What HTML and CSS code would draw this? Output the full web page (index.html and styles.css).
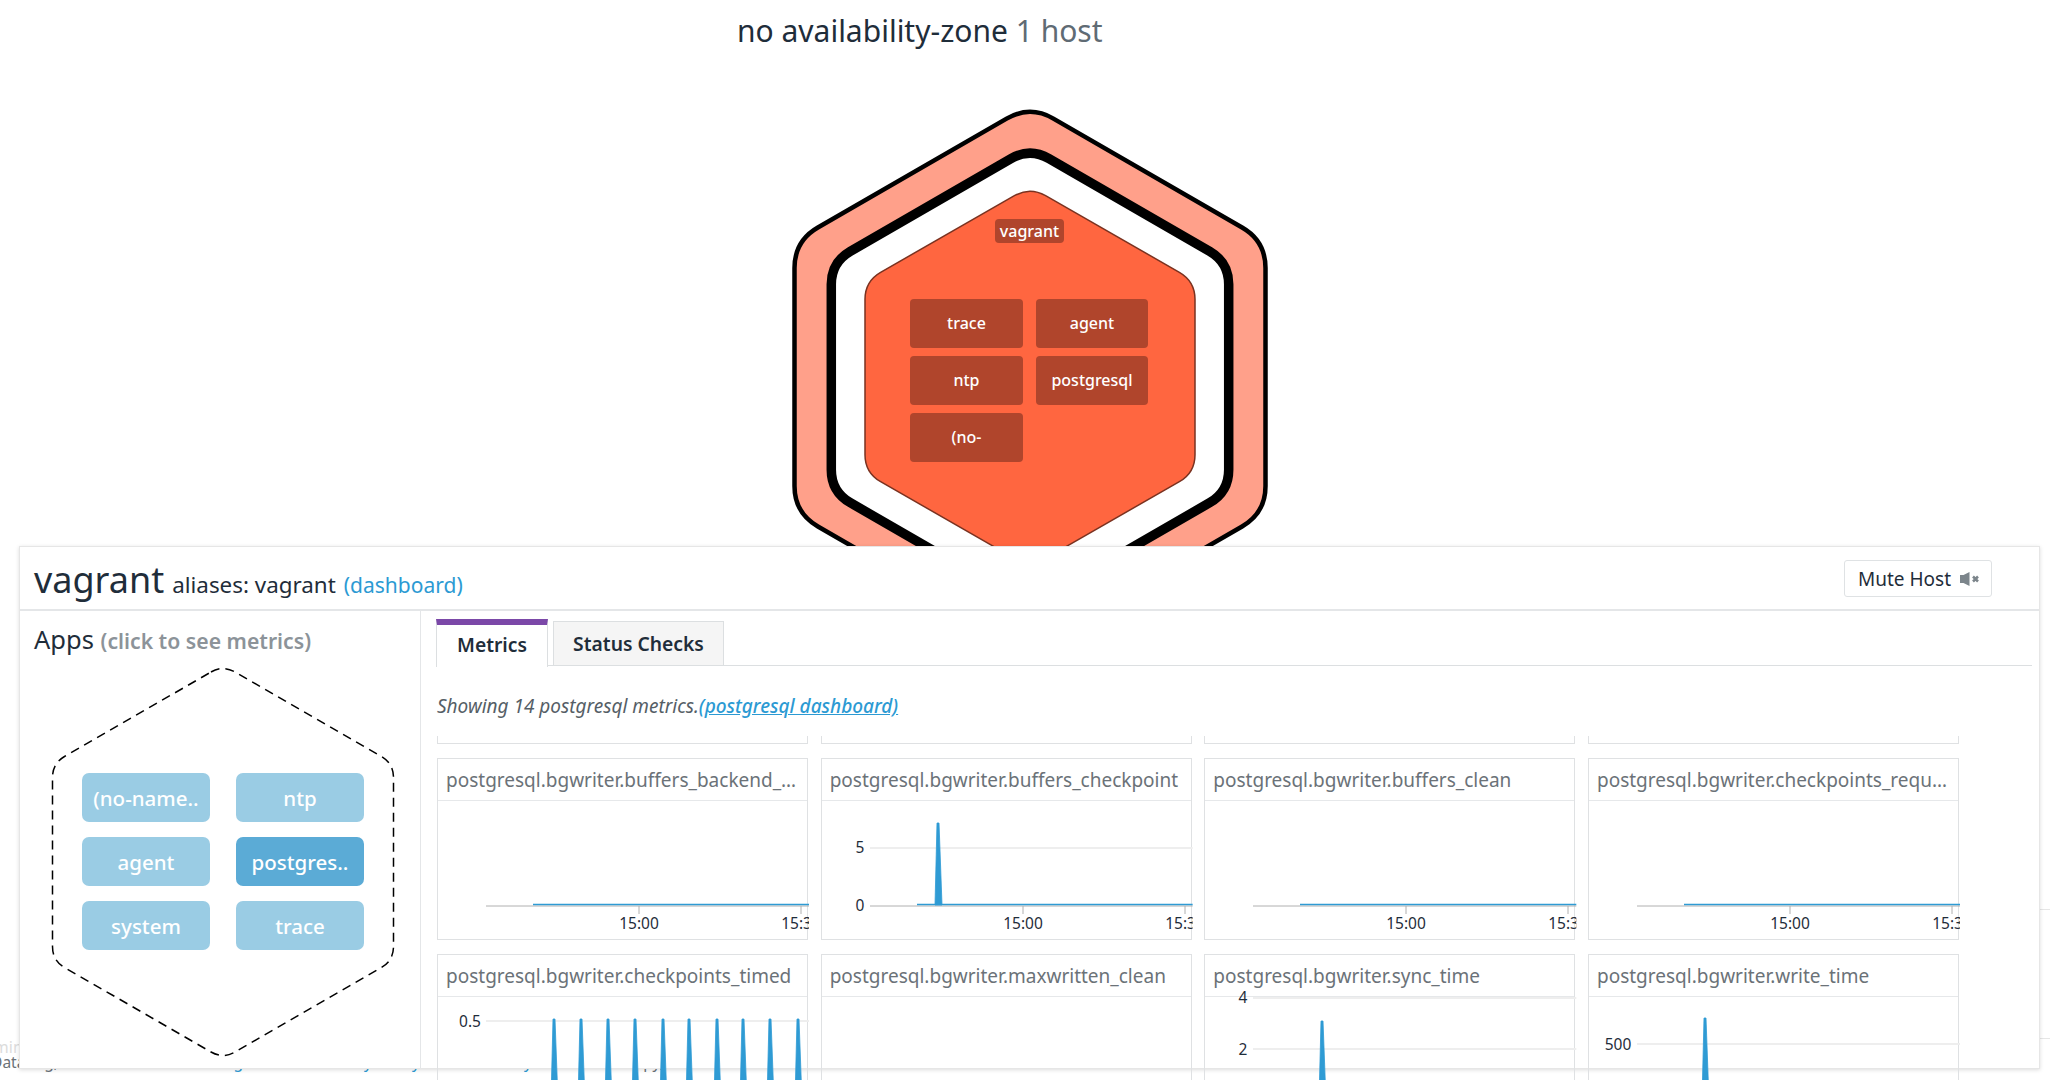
FILE: index.html
```html
<!DOCTYPE html>
<html lang="en">
<head>
<meta charset="utf-8">
<title>Host map</title>
<link rel="stylesheet" href="styles.css">
</head>
<body>
<div class="backdrop">
  <div class="foot-faint">admin</div>
  <div class="foot-line">
    <span>Datadog,</span>
    <a>Monitoring</a>
    <a>Security</a>
    <a>Privacy</a>
    <a>Availability</a>
    <span>Copy,</span>
  </div>
  <div class="foot-rule"></div>
</div>

<h2 class="zone-title">no availability-zone <span class="zone-count">1 host</span></h2>

<div class="host-node">
  <svg class="host-hex" viewBox="-240 -275 480 550" width="480" height="550">
    <path class="ring-outer" d="M-23.4 -258.4Q0 -271.9 23.4 -258.4L212.1 -149.45Q235.5 -135.95 235.5 -108.95L235.5 108.95Q235.5 135.95 212.1 149.45L23.4 258.4Q0 271.9 -23.4 258.4L-212.1 149.45Q-235.5 135.95 -235.5 108.95L-235.5 -108.95Q-235.5 -135.95 -212.1 -149.45Z"/>
    <path class="ring-mid" d="M-19 -218.4Q0 -229.4 19 -218.4L179.7 -125.7Q198.7 -114.7 198.7 -92.7L198.7 92.7Q198.7 114.7 179.7 125.7L19 218.4Q0 229.4 -19 218.4L-179.7 125.7Q-198.7 114.7 -198.7 92.7L-198.7 -92.7Q-198.7 -114.7 -179.7 -125.7Z"/>
    <path class="ring-core" d="M-15.6 -181.3Q0 -190.3 15.6 -181.3L149.4 -104.65Q165 -95.65 165 -77.65L165 77.65Q165 95.65 149.4 104.65L15.6 181.3Q0 190.3 -15.6 181.3L-149.4 104.65Q-165 95.65 -165 77.65L-165 -77.65Q-165 -95.65 -149.4 -104.65Z"/>
  </svg>
  <div class="host-label">vagrant</div>
  <div class="host-apps">
    <div class="host-app">trace</div>
    <div class="host-app">agent</div>
    <div class="host-app">ntp</div>
    <div class="host-app">postgresql</div>
    <div class="host-app">(no-</div>
  </div>
</div>

<section class="panel">
  <header class="panel-head">
    <h1 class="host-name">vagrant</h1>
    <span class="host-alias">aliases: vagrant</span>
    <a class="host-link">(dashboard)</a>
    <button class="mute-btn">Mute Host
      <svg class="mute-icon" viewBox="0 0 20 14" width="20" height="14">
        <path d="M0 3h3.500L9.500 0v14L3.500 11H0z"/>
        <path class="mute-x" d="M13 4.500l5 5M18 4.500l-5 5"/>
      </svg>
    </button>
  </header>
  <div class="panel-body">
    <aside class="apps">
      <h3 class="apps-title">Apps <span class="apps-hint">(click to see metrics)</span></h3>
      <div class="apps-hex">
        <svg class="apps-outline" viewBox="-171 -197 342 394" width="342" height="394">
          <path d="M-12 -190Q0 -197 12 -190L158.500 -105.500Q170.500 -98.500 170.500 -84.500L170.500 84.500Q170.500 98.500 158.500 105.500L12 190Q0 197 -12 190L-158.500 105.500Q-170.500 98.500 -170.500 84.500L-170.500 -84.500Q-170.500 -98.500 -158.500 -105.500Z"/>
        </svg>
        <div class="apps-grid">
          <button class="app-btn">(no-name..</button>
          <button class="app-btn">ntp</button>
          <button class="app-btn">agent</button>
          <button class="app-btn is-active">postgres..</button>
          <button class="app-btn">system</button>
          <button class="app-btn">trace</button>
        </div>
      </div>
    </aside>
    <main class="metrics">
      <nav class="tabs">
        <a class="tab is-current">Metrics</a>
        <a class="tab">Status Checks</a>
      </nav>
      <p class="metrics-note">Showing 14 postgresql metrics.<a>(postgresql dashboard)</a></p>
      <div class="metric-window">
        <div class="metric-grid">
          <article class="card"></article>
          <article class="card"></article>
          <article class="card"></article>
          <article class="card"></article>

          <article class="card">
            <div class="card-title">postgresql.bgwriter.buffers_backend_fsync</div>
            <svg class="chart" viewBox="0 0 372 140" width="372" height="140">
              <path class="axis" d="M48 105H372M201 105v8M363 105v8"/>
              <path class="flat" d="M95 103.500H372"/>
              <text class="tick" x="201" y="128">15:00</text>
              <text class="tick" x="363" y="128">15:30</text>
            </svg>
          </article>
          <article class="card">
            <div class="card-title">postgresql.bgwriter.buffers_checkpoint</div>
            <svg class="chart" viewBox="0 0 372 140" width="372" height="140">
              <path class="grid-line" d="M48 47H372"/>
              <path class="axis" d="M48 105H372M201 105v8M363 105v8"/>
              <path class="flat" d="M95 103.500H372"/>
              <path class="spike" d="M113 104L115 22h2L120 104z"/>
              <text class="tick" x="38" y="52">5</text>
              <text class="tick" x="38" y="110">0</text>
              <text class="tick" x="201" y="128">15:00</text>
              <text class="tick" x="363" y="128">15:30</text>
            </svg>
          </article>
          <article class="card">
            <div class="card-title">postgresql.bgwriter.buffers_clean</div>
            <svg class="chart" viewBox="0 0 372 140" width="372" height="140">
              <path class="axis" d="M48 105H372M201 105v8M363 105v8"/>
              <path class="flat" d="M95 103.500H372"/>
              <text class="tick" x="201" y="128">15:00</text>
              <text class="tick" x="363" y="128">15:30</text>
            </svg>
          </article>
          <article class="card">
            <div class="card-title">postgresql.bgwriter.checkpoints_requested</div>
            <svg class="chart" viewBox="0 0 372 140" width="372" height="140">
              <path class="axis" d="M48 105H372M201 105v8M363 105v8"/>
              <path class="flat" d="M95 103.500H372"/>
              <text class="tick" x="201" y="128">15:00</text>
              <text class="tick" x="363" y="128">15:30</text>
            </svg>
          </article>

          <article class="card">
            <div class="card-title">postgresql.bgwriter.checkpoints_timed</div>
            <svg class="chart" viewBox="0 0 372 140" width="372" height="140">
              <path class="grid-line" d="M48 24H372"/>
              <path class="spike" d="M113 104L115 22h2L120 104zM140 104L142 22h2L147 104zM167 104L169 22h2L174 104zM194 104L196 22h2L201 104zM222 104L224 22h2L229 104zM248 104L250 22h2L255 104zM276 104L278 22h2L283 104zM302 104L304 22h2L309 104zM329 104L331 22h2L336 104zM357 104L359 22h2L364 104z"/>
              <text class="tick" x="32" y="30">0.5</text>
            </svg>
          </article>
          <article class="card">
            <div class="card-title">postgresql.bgwriter.maxwritten_clean</div>
          </article>
          <article class="card">
            <div class="card-title">postgresql.bgwriter.sync_time</div>
            <svg class="chart" viewBox="0 0 372 140" width="372" height="140">
              <path class="grid-line" d="M48 1H372M48 52H372"/>
              <path class="spike" d="M114 104L116 24h2L121 104z"/>
              <text class="tick" x="38" y="6">4</text>
              <text class="tick" x="38" y="58">2</text>
            </svg>
          </article>
          <article class="card">
            <div class="card-title">postgresql.bgwriter.write_time</div>
            <svg class="chart" viewBox="0 0 372 140" width="372" height="140">
              <path class="grid-line" d="M48 47H372"/>
              <path class="spike" d="M113 104L115 21h2L120 104z"/>
              <text class="tick" x="29" y="53">500</text>
            </svg>
          </article>
        </div>
      </div>
    </main>
  </div>
</section>
</body>
</html>
```
FILE: styles.css
```css
* { box-sizing: border-box; }

html, body {
  margin: 0;
  height: 1080px;
  overflow: hidden;
  background: #fff;
  font-family: "Noto Sans", "Open Sans", sans-serif;
  color: #1f2d3a;
}

body { position: relative; }

a { color: #2c9ad3; }

.zone-title {
  position: relative;
  margin: 0;
  padding: 12px 0 0 737px;
  font-size: 30px;
  line-height: 38px;
  font-weight: 400;
  color: #1f2d3a;
}

.zone-count { color: #5f6b74; }

/* backdrop behind the sliding panel */
.backdrop { position: absolute; inset: 0; }

.foot-faint {
  position: absolute;
  left: -25px;
  top: 1036px;
  font-size: 16px;
  line-height: 22px;
  color: #dcdcdc;
}

.foot-line {
  position: absolute;
  left: -8px;
  top: 1051px;
  display: grid;
  grid-template-columns: 66px 185px 129px 48px 112px 132px;
  font-size: 15.500px;
  line-height: 22px;
  color: #6b7278;
  white-space: nowrap;
}

.foot-line > * { justify-self: end; }

.foot-rule {
  position: absolute;
  left: 2040px;
  right: 0;
  top: 909px;
  height: 130px;
  border-top: 1px solid #e6e6e6;
  border-bottom: 1px solid #e6e6e6;
}

/* host hexagon */
.host-node {
  position: absolute;
  left: 789.500px;
  top: 102px;
  width: 480px;
  height: 550px;
}

.host-hex { display: block; }

.ring-outer { fill: #ffa08a; stroke: #000; stroke-width: 4.500; }
.ring-mid { fill: #fff; stroke: #000; stroke-width: 9.500; }
.ring-core { fill: #ff6640; stroke: #7a3220; stroke-width: 1.500; }

.host-label {
  position: absolute;
  left: 205.500px;
  top: 117px;
  width: 69px;
  height: 24px;
  border-radius: 4px;
  background: #b0452c;
  color: #fff;
  font-size: 16px;
  font-weight: 500;
  line-height: 24px;
  text-align: center;
}

.host-apps {
  position: absolute;
  left: 120.500px;
  top: 197px;
  display: grid;
  grid-template-columns: 113px 112px;
  grid-auto-rows: 48.500px;
  column-gap: 13px;
  row-gap: 8.500px;
}

.host-app {
  display: flex;
  align-items: center;
  justify-content: center;
  border-radius: 4px;
  background: #b0452c;
  color: #fff;
  font-size: 16px;
  font-weight: 500;
}

/* detail panel */
.panel {
  position: absolute;
  left: 19px;
  top: 546px;
  right: 10px;
  height: 523px;
  display: flex;
  flex-direction: column;
  background: #fff;
  border: 1px solid #e6e6e6;
  box-shadow: 0 1px 4px rgba(0, 0, 0, .14);
}

.panel-head {
  flex: none;
  display: flex;
  align-items: baseline;
  height: 64px;
  padding: 4px 47px 0 14px;
  border-bottom: 2px solid #e4e6e8;
}

.host-name {
  margin: 0 8px 0 0;
  font-size: 36px;
  line-height: 58px;
  font-weight: 400;
  color: #1f2d3a;
}

.host-alias { font-size: 22.400px; margin-right: 8px; }

.host-link { font-size: 21px; }

.mute-btn {
  display: flex;
  align-items: center;
  gap: 9px;
  align-self: flex-start;
  margin: 9px 0 0 auto;
  width: 148px;
  height: 37px;
  padding: 0 0 0 13px;
  background: #fff;
  border: 1px solid #dfe2e4;
  border-radius: 3px;
  font: 400 19px "Noto Sans", sans-serif;
  color: #1f2d3a;
}

.mute-icon { flex: none; fill: #7c858b; }
.mute-x { fill: none; stroke: #7c858b; stroke-width: 2.500; }

.panel-body { flex: 1; min-height: 0; display: flex; }

.apps {
  flex: none;
  width: 401px;
  border-right: 1px solid #e4e6e8;
}

.apps-title {
  margin: 0;
  padding: 13px 0 0 14px;
  font-size: 25.500px;
  line-height: 30px;
  font-weight: 400;
}

.apps-hint { font-size: 21.200px; font-weight: 600; color: #8c9399; }

.apps-hex {
  position: relative;
  width: 342px;
  height: 394px;
  margin: 9px 0 0 32px;
}

.apps-outline {
  position: absolute;
  inset: 0;
  overflow: visible;
  fill: none;
  stroke: #000;
  stroke-width: 1.500;
  stroke-dasharray: 9 6;
}

.apps-grid {
  position: relative;
  display: grid;
  grid-template-columns: 128px 128px;
  grid-auto-rows: 49px;
  column-gap: 26px;
  row-gap: 15px;
  padding: 108px 0 0 30px;
}

.app-btn {
  padding: 0;
  border: 0;
  border-radius: 7px;
  background: #9acce4;
  color: #fff;
  font: 500 20.500px "Noto Sans", sans-serif;
}

.app-btn.is-active { background: #5babd6; }

.metrics { flex: 1; min-width: 0; padding: 8px 7px 0 15px; }

.tabs {
  display: flex;
  gap: 5px;
  align-items: flex-start;
  height: 47px;
  border-bottom: 1px solid #dcdfe1;
}

.tab {
  width: 171px;
  height: 44px;
  margin-top: 2px;
  background: #f5f5f5;
  border: 1px solid #dcdfe1;
  border-bottom: 0;
  color: #1f2d3a;
  font-size: 19.300px;
  font-weight: 600;
  line-height: 43px;
  text-align: center;
}

.tab.is-current {
  position: relative;
  width: 112px;
  height: 48px;
  margin-top: 0;
  background: #fff;
  border-top: 6px solid #7b48a8;
  line-height: 40px;
}

.metrics-note {
  margin: 28px 0 18px 1px;
  font-size: 19px;
  line-height: 24px;
  font-style: italic;
  color: #555e66;
}

.metrics-note a { text-decoration: underline; font-weight: 500; }

.metric-window {
  display: flow-root;
  height: 400px;
  margin-left: 1px;
  clip-path: inset(0 -10px 0 -10px);
}

.metric-grid {
  display: grid;
  grid-template-columns: repeat(4, 371px);
  grid-auto-rows: 182px;
  column-gap: 12.670px;
  row-gap: 14px;
  margin-top: -174px;
}

.card { border: 1px solid #dfe1e3; min-width: 0; }

.card-title {
  height: 42px;
  padding: 0 8px;
  border-bottom: 1px solid #e6e8ea;
  color: #6b7278;
  font-size: 19px;
  line-height: 42px;
  white-space: nowrap;
  overflow: hidden;
  text-overflow: ellipsis;
}

.chart {
  display: block;
  overflow: visible;
  clip-path: inset(-14px 1px 0 0);
}

.axis { fill: none; stroke: #b0b0b0; stroke-width: 1; }
.flat { fill: none; stroke: #2f9bd4; stroke-width: 1.500; }
.grid-line { fill: none; stroke: #eeeeee; stroke-width: 2; }
.spike { fill: #2f9bd4; stroke: #2f9bd4; stroke-width: .8; }

.tick {
  font-size: 15.500px;
  fill: #1f2d3a;
  text-anchor: middle;
}
```
